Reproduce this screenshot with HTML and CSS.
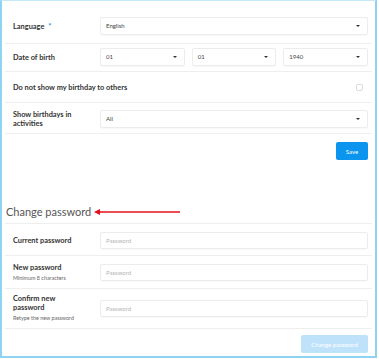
FILE: index.html
```html
<!DOCTYPE html>
<html>
<head>
    <meta charset="utf-8">
    <title>Settings</title>
<link rel="stylesheet" href="styles.css">
</head>
<body>
<div class="frame">

    <div class="row first">
        <div class="label">Language <span class="req">*</span></div>
        <div class="field">
            <div class="select">English<span class="caret"></span></div>
        </div>
    </div>

    <div class="row dob">
        <div class="label">Date of birth</div>
        <div class="field three">
            <div class="select">01<span class="caret"></span></div>
            <div class="select">01<span class="caret"></span></div>
            <div class="select">1940<span class="caret"></span></div>
        </div>
    </div>

    <div class="row check">
        <div class="label wide">Do not show my birthday to others</div>
        <span class="box"></span>
    </div>

    <div class="row birthdays">
        <div class="label">Show birthdays in activities</div>
        <div class="field">
            <div class="select">All<span class="caret"></span></div>
        </div>
    </div>

    <div class="actions">
        <button class="btn save">Save</button>
    </div>

    <h2 class="title">Change password
        <svg class="arrow" width="86" height="8" viewBox="0 0 86 8">
            <path d="M4 4 H86" stroke="#e3101a" stroke-width="1.6"/>
            <path d="M0 4 L6 1 L6 7 Z" fill="#e3101a"/>
        </svg>
    </h2>

    <div class="row pw1">
        <div class="label">Current password</div>
        <div class="field"><div class="input">Password</div></div>
    </div>

    <div class="row pw2">
        <div class="label">New password
            <div class="hint">Minimum 8 characters</div>
        </div>
        <div class="field"><div class="input">Password</div></div>
    </div>

    <div class="row pw3">
        <div class="label">Confirm new password
            <div class="hint">Retype the new password</div>
        </div>
        <div class="field"><div class="input">Password</div></div>
    </div>

    <div class="actions last">
        <button class="btn change">Change password</button>
    </div>

</div>
</body>
</html>
```

FILE: styles.css
```css
*
{
  margin: 0;
  padding: 0;
  box-sizing: border-box;
}

body
{
  font-family: Lato, 'Noto Sans', sans-serif;
  background: #fff;
  color: #333;
}

div.frame
{
  width: 377px;
  height: 358px;
  border: 2px solid #8fd3f2;
  border-top: 1px solid #c6e9f8;
  padding: 0 3px 0 3px;
}

div.row
{
  display: flex;
  align-items: center;
  border-bottom: 1px solid #eeeeee;
}

div.row.first
{
  padding: 16px 0 8px;
}

div.row.dob
{
  padding: 4px 0 5px;
}

div.row.check
{
  height: 31px;
}

div.row.birthdays
{
  padding: 7px 0 5px;
}

div.label
{
  width: 95px;
  padding-left: 8px;
  padding-right: 28px;
  font-size: 7.4px;
  font-weight: bold;
  line-height: 9px;
  color: #333;
}

div.label.wide
{
  width: auto;
  flex: 1;
}

span.req
{
  color: #1a8fe3;
  margin-left: 2px;
}

div.hint
{
  font-size: 5.4px;
  font-weight: normal;
  color: #666;
  margin-top: 2px;
  line-height: 8px;
  white-space: nowrap;
}

div.field
{
  flex: 1;
  padding-right: 4px;
}

div.three
{
  display: flex;
  gap: 7px;
}

div.three div.select
{
  flex: 1;
}

div.select, div.input
{
  position: relative;
  height: 18px;
  border: 1px solid #ececec;
  border-radius: 2px;
  box-shadow: 0 1px 1px rgba(0,0,0,0.03);
  font-size: 6px;
  line-height: 16px;
  padding-left: 5px;
  color: #444;
}

div.input
{
  height: 17px;
  line-height: 15px;
  color: #b5b5b5;
}

span.caret
{
  position: absolute;
  right: 7px;
  top: 7px;
  border-left: 2px solid transparent;
  border-right: 2px solid transparent;
  border-top: 2px solid #333;
}

span.box
{
  width: 7px;
  height: 7px;
  border: 1px solid #dcdcdc;
  border-radius: 2px;
  margin-right: 9px;
}

div.actions
{
  display: flex;
  justify-content: flex-end;
  padding: 8px 4px 0 0;
}

div.actions.last
{
  padding-top: 6px;
}

button.btn
{
  height: 18px;
  border: 0;
  border-radius: 2px;
  color: #fff;
  font-family: Lato, sans-serif;
  font-size: 6px;
}

button.save
{
  width: 32px;
  background: #0b95ee;
}

button.change
{
  width: 67px;
  background: #bfe2fb;
}

h2.title
{
  display: flex;
  align-items: center;
  margin-top: 44px;
  padding: 0 0 3px 1px;
  font-size: 11px;
  font-weight: normal;
  line-height: 16px;
  color: #555;
  border-bottom: 1px solid #eeeeee;
}

svg.arrow
{
  margin-left: 3px;
}

div.row.pw1
{
  padding: 8px 0 6px;
}

div.row.pw2
{
  padding: 7px 0 6px;
}

div.row.pw3
{
  padding: 5px 0 6px;
}
```
